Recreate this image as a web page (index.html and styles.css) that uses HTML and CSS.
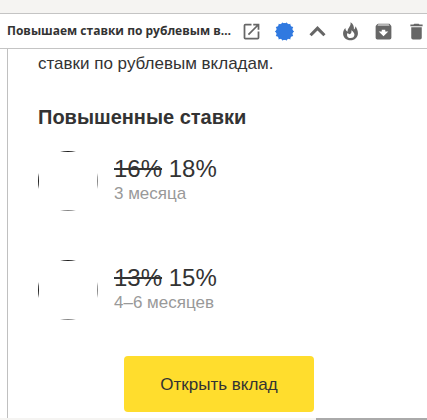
FILE: index.html
```
<!DOCTYPE html>
<html lang="ru">
<head>
    <meta charset="UTF-8">
    <meta name="viewport" content="width=device-width, initial-scale=1.0">
    <title>Повышаем ставки</title>
    <link rel="stylesheet" href="styles.css">
</head>
<body>
    <header class="header">
        <h1 class="subject">Повышаем ставки по рублевым вкладам</h1>
        <div class="toolbar">
            <button class="tool" type="button" aria-label="Открыть в новом окне">
                <svg viewBox="0 0 24 24"><path d="M19 19H5V5h7V3H5a2 2 0 0 0-2 2v14a2 2 0 0 0 2 2h14a2 2 0 0 0 2-2v-7h-2v7zM14 3v2h3.600l-9.800 9.800 1.400 1.400L19 6.400V10h2V3h-7z"/></svg>
            </button>
            <button class="tool badge" type="button" aria-label="Отметить">
                <svg viewBox="0 0 24 24"><path d="M12 4 14.300 1.500 15.500 4.200 18.700 3 18.900 6.100 22 6.800 20.500 9.600 23 12 20.500 14.400 22 17.200 18.900 17.900 18.700 21 15.500 19.800 14.300 22.500 12 20.500 9.700 22.500 8.500 19.800 5.300 21 5.100 17.900 2 17.200 3.500 14.400 1 12 3.500 9.600 2 6.800 5.100 6.100 5.300 3 8.500 4.200 9.700 1.500z"/><circle cx="12" cy="12" r="9.600"/></svg>
            </button>
            <button class="tool" type="button" aria-label="Свернуть">
                <svg viewBox="0 0 24 24"><path d="M12 5.800 2.800 15 5.300 17.500l6.700-6.700 6.700 6.700 2.500-2.500z"/></svg>
            </button>
            <button class="tool" type="button" aria-label="Спам">
                <svg viewBox="0 0 24 24"><path d="M12 1.500c.6 2.800-.6 4.400-2 6.400-.9 1.300-1.500 2.600-1.300 4.300C7 11.500 6.200 10 6.200 8 4.200 10 3.500 12.200 3.500 14.200c0 4.800 3.800 7.800 8.500 7.800s8.500-3.400 8.500-8.100c0-3.100-1.400-5.400-2.800-7.900-.2 1.800-.7 2.900-1.800 3.700.3-3.400-.9-6.400-3.900-8.200zM13 10.500c2.100 1.600 3.500 3.200 3.500 5.200 0 2.300-1.700 3.800-4.300 3.800S8 17.900 8 15.900c0-.9.300-1.600.8-2.200.5.800 1.300 1.300 2.400 1.300 1.600-.7 2.200-2.200 1.800-4.500z"/></svg>
            </button>
            <button class="tool" type="button" aria-label="В архив">
                <svg viewBox="0 0 24 24"><path d="M20.500 5.200l-1.400-1.700C18.900 3.200 18.500 3 18 3H6c-.5 0-.9.200-1.200.6L3.500 5.200C3.200 5.600 3 6 3 6.500V19a2 2 0 0 0 2 2h14a2 2 0 0 0 2-2V6.500c0-.5-.2-.9-.5-1.300zM12 17.500 6.500 12H10v-2h4v2h3.500L12 17.500zM5.100 5l.8-1h12l1 1H5.100z"/></svg>
            </button>
            <button class="tool" type="button" aria-label="Удалить">
                <svg viewBox="0 0 24 24"><path d="M6 19a2 2 0 0 0 2 2h8a2 2 0 0 0 2-2V7H6v12zM19 4h-3.500l-1-1h-5l-1 1H5v2h14V4z"/></svg>
            </button>
        </div>
    </header>
    <main class="page">
        <article class="message">
            <p class="text">ставки по рублевым вкладам.</p>
            <h2 class="title">Повышенные ставки</h2>
            <ul class="rates">
                <li class="rate">
                    <svg class="ring" viewBox="0 0 60 60">
                        <path class="ring-dark" d="M22 1Q30 -1 38 1ZM1 22Q-1 30 1 38Z"/>
                        <path class="ring-light" d="M22 59Q30 61 38 59ZM59 22Q61 30 59 38Z"/>
                    </svg>
                    <div>
                        <p class="percent"><s>16%</s> 18%</p>
                        <p class="term">3 месяца</p>
                    </div>
                </li>
                <li class="rate">
                    <svg class="ring" viewBox="0 0 60 60">
                        <path class="ring-dark" d="M22 1Q30 -1 38 1ZM1 22Q-1 30 1 38Z"/>
                        <path class="ring-light" d="M22 59Q30 61 38 59ZM59 22Q61 30 59 38Z"/>
                    </svg>
                    <div>
                        <p class="percent"><s>13%</s> 15%</p>
                        <p class="term">4–6 месяцев</p>
                    </div>
                </li>
            </ul>
            <a class="open" href="#">Открыть вклад</a>
        </article>
    </main>
    <footer class="bottom"></footer>
</body>
</html>
```

FILE: styles.css
```
* {
    box-sizing: border-box;
}
body {
    margin: 0;
    padding-top: 13px;
    background: #f5f4f2;
    color: #333;
    font-family: "Liberation Sans", Arial, sans-serif;
    font-size: 17px;
    line-height: 24px;
}
h1, h2, p, ul {
    margin: 0;
    padding: 0;
}
.header {
    display: flex;
    align-items: center;
    gap: 8px;
    height: 36px;
    padding-left: 7px;
    background: #fff;
    border-top: 1px solid #c4c4c4;
    border-bottom: 1px solid #c4c4c4;
}
.subject {
    flex: 1;
    min-width: 0;
    overflow: hidden;
    white-space: nowrap;
    text-overflow: ellipsis;
    font-family: "Open Sans", "Noto Sans", sans-serif;
    font-size: 12px;
    font-weight: bold;
}
.toolbar {
    display: flex;
    gap: 12px;
}
.tool {
    width: 21px;
    height: 21px;
    padding: 0;
    border: 0;
    background: none;
    color: #666;
    cursor: pointer;
}
.tool svg {
    display: block;
    width: 100%;
    fill: currentColor;
    fill-rule: evenodd;
}
.badge {
    color: #3079e0;
}
.page {
    padding-left: 7px;
    background: #fff;
}
.message {
    display: flex;
    flex-direction: column;
    padding: 3px 27px 6px 30px;
    border-left: 1px solid #c0c0c0;
}
.title {
    margin-top: 29px;
    font-size: 20px;
    line-height: 24px;
}
.rates {
    display: grid;
    gap: 49px;
    margin-top: 22px;
    list-style: none;
}
.rate {
    display: flex;
    gap: 16px;
}
.ring {
    width: 60px;
    height: 60px;
}
.ring-dark {
    fill: #222;
}
.ring-light {
    fill: #888;
}
.percent {
    padding-top: 4px;
    font-size: 24px;
    line-height: 28px;
}
.term {
    color: #999;
    line-height: 22px;
}
.open {
    align-self: center;
    margin-top: 36px;
    padding: 17px 36px 15px;
    border-radius: 4px;
    background: #ffdd2d;
    color: #333;
    text-decoration: none;
}
.bottom {
    height: 2px;
    background: linear-gradient(to right, #f5f4f2 74%, #aaa 74%);
}
```
